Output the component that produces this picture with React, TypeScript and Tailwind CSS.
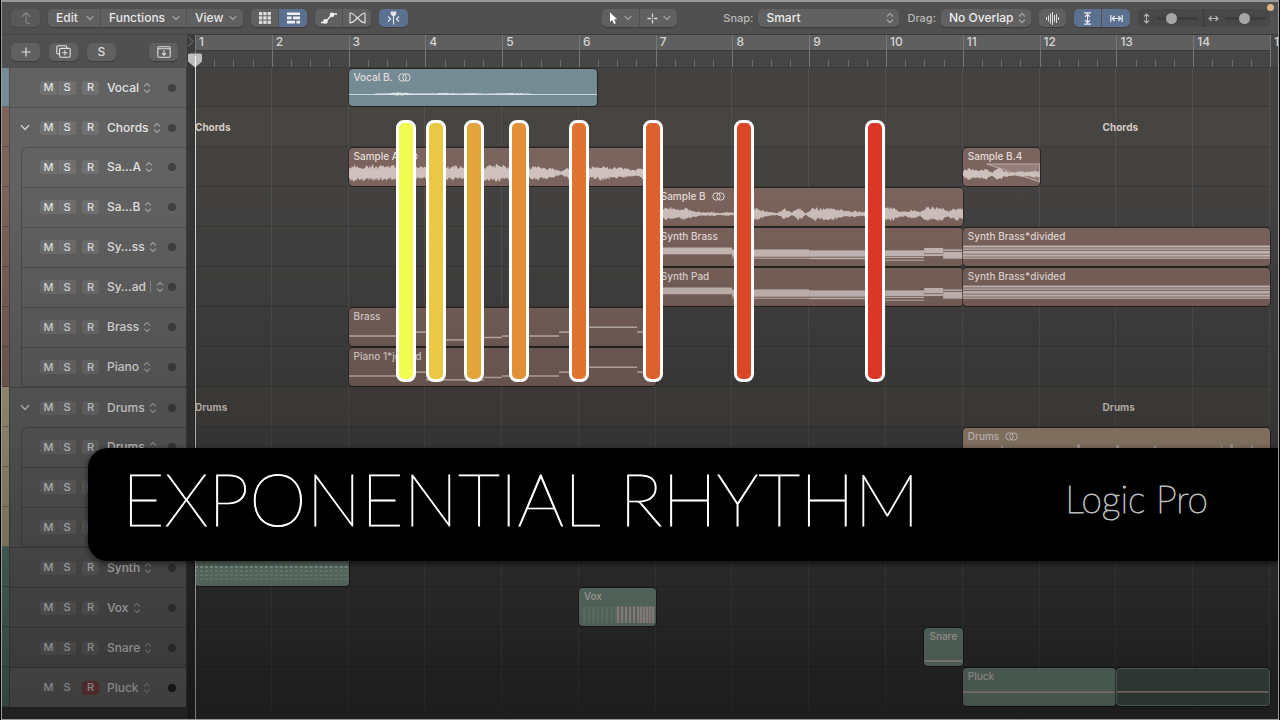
import React from "react";

const BARS = 14;
const pct = (bars: number) => `${(bars / BARS) * 100}%`;

type Kind = "vocal" | "chords" | "drums" | "green";

const stripColor: Record<Kind, string> = {
  vocal: "bg-[#768c95]",
  chords: "bg-[#7d635b]",
  drums: "bg-[#a8a17f]",
  green: "bg-[#5c7a73]",
};
const clipColor: Record<Kind, string> = {
  vocal: "bg-[#758b94]",
  chords: "bg-[#7b645d]",
  drums: "bg-[#a08b76]",
  green: "bg-[#7a9487]",
};

/* ---------- waveforms and notes ---------- */

function wave(width: number, mid: number, amp: (t: number) => number, seed: number, from = 0) {
  let s = seed;
  const rnd = () => {
    s = (s * 16807) % 2147483647;
    return s / 2147483647;
  };
  const top: string[] = [];
  const bottom: string[] = [];
  for (let x = from; x <= width; x += 1) {
    const a = amp((x - from) / (width - from));
    top.push(`${x} ${(mid - a * (0.55 + 0.6 * rnd())).toFixed(1)}`);
    bottom.unshift(`${x} ${(mid + a * (0.55 + 0.6 * rnd())).toFixed(1)}`);
  }
  return `M${top.join("L")}L${bottom.join("L")}Z`;
}

function envelope(points: number[]) {
  return (t: number) => {
    const p = t * (points.length - 1);
    const i = Math.min(points.length - 2, Math.floor(p));
    return points[i] + (points[i + 1] - points[i]) * (p - i);
  };
}

type Rect = [number, number, number, number];

function Notes({ width, rects }: { width: number; rects: Rect[] }) {
  return (
    <svg className="absolute inset-0 size-full" viewBox={`0 0 ${width} 39`} preserveAspectRatio="none" aria-hidden="true">
      {rects.map(([x, y, w, h], i) => (
        <rect key={i} x={x} y={y} width={w} height={h} fill="#cbbdba" />
      ))}
    </svg>
  );
}

function Wave({ width, d, children }: { width: number; d: string; children?: React.ReactNode }) {
  return (
    <svg className="absolute inset-0 size-full" viewBox={`0 0 ${width} 38`} preserveAspectRatio="none" aria-hidden="true">
      <path d={d} fill="#cfc1be" />
      {children}
    </svg>
  );
}

const brassNotes: Rect[] = [
  [0, 28, 54, 1.5],
  [54, 24, 23, 1.5],
  [77, 32, 46, 1.5],
  [115, 29.5, 38, 1.5],
  [153, 28, 57, 1.5],
  [210, 24, 24, 1.5],
  [234, 19, 54, 1.5],
  [288, 24, 19, 1.5],
];
const pianoNotes: Rect[] = [
  [0, 28, 54, 1.5],
  [54, 24, 23, 1.5],
  [77, 32, 58, 1.5],
  [135, 29.5, 18, 1.5],
  [153, 28, 57, 1.5],
  [210, 24, 24, 1.5],
  [234, 19, 54, 1.5],
  [288, 24, 19, 1.5],
];
const synthNotes: Rect[] = [
  [0, 20, 76, 7],
  [76, 22, 77, 7.5],
  [76, 30.5, 77, 1],
  [153, 23, 76, 6.5],
  [153, 30.5, 76, 1.5],
  [229, 23, 39, 6],
  [229, 29.8, 39, 1],
  [229, 32.5, 39, 1],
  [268, 20.5, 19, 5.5],
  [268, 26.8, 19, 2],
  [287, 22, 20, 1.5],
  [287, 24.5, 20, 7],
];
const dividedNotes: Rect[] = [
  [0, 18, 307, 2],
  [0, 21, 307, 1.4],
  [0, 23.4, 307, 3],
  [0, 27.2, 307, 2.2],
  [0, 30.2, 307, 1.4],
];
const voxNotes: Rect[] = [38, 42, 46, 50, 54, 58, 61, 64, 67, 70, 73].map((x): Rect => [x, 19, 2.4, 17]);

/* ---------- data ---------- */

interface Clip {
  name: string;
  start: number;
  length: number;
  stereo?: boolean;
  loop?: boolean;
  art?: React.ReactNode;
}
interface Track {
  name: string;
  kind: Kind;
  folder?: boolean;
  nest?: "first" | "mid" | "last";
  armed?: boolean;
  bar?: boolean;
  clips: Clip[];
}

const tracks: Track[] = [
  {
    name: "Vocal",
    kind: "vocal",
    clips: [
      {
        name: "Vocal B.",
        start: 3,
        length: 3.24,
        stereo: true,
        art: (
          <svg className="absolute inset-0 size-full" viewBox="0 0 248 37" preserveAspectRatio="none" aria-hidden="true">
            <path d="M0 25.5H248" stroke="#c9d6db" />
            <path d={wave(182, 25, envelope([0.4, 0.8, 1.5, 0.9, 0.6, 0.8, 1.2, 0.5, 1, 0.3, 0.6, 1.1, 0.9, 0.2]), 11, 25)} fill="#dbe5e9" />
          </svg>
        ),
      },
    ],
  },
  { name: "Chords", kind: "chords", folder: true, clips: [] },
  {
    name: "Sa…A",
    kind: "chords",
    nest: "first",
    clips: [
      {
        name: "Sample A",
        start: 3,
        length: 4,
        stereo: true,
        art: <Wave width={307} d={wave(307, 25, envelope([8, 7, 8, 7, 7, 8, 7, 6, 8, 7, 7, 6, 8, 7, 8, 7, 8, 6, 7, 5, 2, 7, 7, 6, 7, 6, 5, 3, 7, 6]), 77)} />,
      },
      {
        name: "Sample B.4",
        start: 11,
        length: 1,
        art: (
          <Wave width={77} d={wave(77, 26, envelope([3, 7, 4, 4, 5, 2, 7, 3, 2, 2, 3, 2, 4, 3]), 9)}>
            <path d="M24 16H77V34Z" fill="#cbbdba" fillOpacity="0.3" stroke="#cbbdba" strokeWidth="0.8" />
          </Wave>
        ),
      },
    ],
  },
  {
    name: "Sa…B",
    kind: "chords",
    nest: "mid",
    clips: [
      {
        name: "Sample B",
        start: 7,
        length: 4,
        stereo: true,
        art: (
          <Wave
            width={307}
            d={wave(307, 26, envelope([5, 6, 7, 4, 6, 4, 2, 2, 2, 1, 2, 1, 3, 4, 6, 4, 2, 1, 6, 1, 7, 1, 7, 5, 6, 6, 4, 3, 3, 2, 5, 4, 6, 7, 3, 3, 5, 2, 8, 6, 7, 3, 6, 7]), 23)}
          />
        ),
      },
    ],
  },
  {
    name: "Sy…ss",
    kind: "chords",
    nest: "mid",
    clips: [
      { name: "Synth Brass", start: 7, length: 4, art: <Notes width={307} rects={synthNotes} /> },
      { name: "Synth Brass*divided", start: 11, length: 4, art: <Notes width={307} rects={dividedNotes} /> },
    ],
  },
  {
    name: "Sy…ad",
    kind: "chords",
    nest: "mid",
    bar: true,
    clips: [
      { name: "Synth Pad", start: 7, length: 4, art: <Notes width={307} rects={synthNotes} /> },
      { name: "Synth Brass*divided", start: 11, length: 4, art: <Notes width={307} rects={dividedNotes} /> },
    ],
  },
  { name: "Brass", kind: "chords", nest: "mid", clips: [{ name: "Brass", start: 3, length: 4, art: <Notes width={307} rects={brassNotes} /> }] },
  { name: "Piano", kind: "chords", nest: "last", clips: [{ name: "Piano 1*joined", start: 3, length: 4, art: <Notes width={307} rects={pianoNotes} /> }] },
  { name: "Drums", kind: "drums", folder: true, clips: [] },
  {
    name: "Drums",
    kind: "drums",
    nest: "first",
    clips: [
      {
        name: "Drums",
        start: 11,
        length: 4,
        stereo: true,
        art: <Notes width={307} rects={[[38, 18, 2, 20], [114, 17, 3, 20], [153, 18, 3, 20], [191, 18, 2, 20], [258, 18, 1, 20], [267, 17, 3, 20], [288, 18, 2, 20]]} />,
      },
    ],
  },
  { name: "", kind: "drums", nest: "mid", clips: [] },
  { name: "", kind: "drums", nest: "last", clips: [] },
  {
    name: "Synth",
    kind: "green",
    clips: [
      {
        name: "",
        start: 1,
        length: 2,
        art: (
          <svg className="absolute inset-0 size-full" viewBox="0 0 154 37" preserveAspectRatio="none" aria-hidden="true">
            <path d="M0 18.5H154" stroke="#b9cbc0" strokeWidth="2" strokeDasharray="3 2" />
            <path d="M0 22.5H154M0 26.5H154M0 30.5H154" stroke="#94ad9f" strokeWidth="1.5" strokeDasharray="3 2" />
          </svg>
        ),
      },
    ],
  },
  {
    name: "Vox",
    kind: "green",
    clips: [
      {
        name: "Vox",
        start: 6,
        length: 1,
        art: (
          <>
            <svg className="absolute inset-0 size-full" viewBox="0 0 77 37" preserveAspectRatio="none" aria-hidden="true">
              <path d="M4 26.5H38" stroke="#8aa295" strokeWidth="16" strokeDasharray="3 1.5" />
            </svg>
            <Notes width={77} rects={voxNotes} />
          </>
        ),
      },
    ],
  },
  { name: "Snare", kind: "green", clips: [{ name: "Snare", start: 10.5, length: 0.5, art: <Notes width={38} rects={[[0, 33, 38, 1.8]]} /> }] },
  {
    name: "Pluck",
    kind: "green",
    armed: true,
    clips: [
      { name: "Pluck", start: 11, length: 2, art: <Notes width={154} rects={[[0, 24, 154, 1.6]]} /> },
      { name: "", start: 13, length: 2, loop: true, art: <Notes width={154} rects={[[0, 24, 154, 1.6]]} /> },
    ],
  },
];

const pillars = [
  { at: 3.75, color: "bg-[#f1fc52]" },
  { at: 4.14, color: "bg-[#e9c944]" },
  { at: 4.63, color: "bg-[#e3a63c]" },
  { at: 5.22, color: "bg-[#e28f37]" },
  { at: 6.0, color: "bg-[#df732f]" },
  { at: 6.96, color: "bg-[#dd612c]" },
  { at: 8.15, color: "bg-[#db4828]" },
  { at: 9.85, color: "bg-[#da3726]" },
];

/* ---------- small icons ---------- */

const Down = () => (
  <svg width="8" height="6" viewBox="0 0 8 6" fill="none" stroke="#9c9c9c" strokeWidth="1.4" strokeLinecap="round" strokeLinejoin="round" aria-hidden="true">
    <path d="M1 1.4L4 4.4L7 1.4" />
  </svg>
);
const UpDown = ({ className = "" }: { className?: string }) => (
  <svg className={className} width="8" height="12" viewBox="0 0 8 12" fill="none" stroke="#a0a0a0" strokeWidth="1.2" strokeLinecap="round" strokeLinejoin="round" aria-hidden="true">
    <path d="M1.4 4L4 1.5L6.6 4M1.4 8L4 10.5L6.6 8" />
  </svg>
);
const Rings = () => (
  <svg width="13" height="9" viewBox="0 0 13 9" fill="none" stroke="currentColor" strokeWidth="1" aria-hidden="true">
    <circle cx="4.5" cy="4.5" r="3.7" />
    <circle cx="8.5" cy="4.5" r="3.7" />
  </svg>
);

function Tool({ label, active, className = "", children }: { label: string; active?: boolean; className?: string; children: React.ReactNode }) {
  return (
    <button type="button" aria-label={label} className={`flex h-[18px] items-center justify-center text-[#dedede] ${active ? "bg-[#5c708f]" : "bg-[#606060]"} ${className}`}>
      {children}
    </button>
  );
}

const group = "flex overflow-hidden rounded-[5px] shadow-[0_1px_1px_rgba(0,0,0,0.25)] divide-x divide-[#525252]";
const single = "rounded-[5px] shadow-[0_1px_1px_rgba(0,0,0,0.25)]";

function Picker({ id, label, value, className }: { id: string; label: string; value: string; className: string }) {
  return (
    <div className="flex items-center gap-[5px]">
      <label htmlFor={id} className="text-[11px] text-[#b8b8b8]">
        {label}
      </label>
      <div className={`relative ${className}`}>
        <select id={id} defaultValue={value} className="block h-[18px] w-full appearance-none rounded-[5px] bg-[#616161] pl-2 text-[12px] leading-[18px] font-medium text-[#ececec] shadow-[0_1px_1px_rgba(0,0,0,0.25)]">
          <option>{value}</option>
        </select>
        <UpDown className="pointer-events-none absolute top-[3px] right-[5px]" />
      </div>
    </div>
  );
}

function Zoom({ label, value, children }: { label: string; value: number; children: React.ReactNode }) {
  return (
    <label className="flex h-[18px] w-[66px] items-center gap-[6px] px-1">
      {children}
      <input
        type="range"
        aria-label={label}
        defaultValue={value}
        className="h-[3px] w-[41px] appearance-none rounded-full bg-[#3d3d3d] [&::-webkit-slider-thumb]:size-[11px] [&::-webkit-slider-thumb]:appearance-none [&::-webkit-slider-thumb]:rounded-full [&::-webkit-slider-thumb]:bg-[#a6a6a6]"
      />
    </label>
  );
}

function Toolbar() {
  return (
    <header className="relative flex h-8 items-center bg-[#505050] pr-2 pl-[9px] text-[12px] font-medium text-[#e6e6e6]">
      <div className="flex gap-2">
        <Tool label="Back" className={`w-[29px] opacity-60 ${single}`}>
          <svg width="12" height="14" viewBox="0 0 12 14" fill="none" stroke="#a0a0a0" strokeWidth="1.3" strokeLinecap="round" strokeLinejoin="round">
            <path d="M2 5.5L6 1.5L10 5.5M6 2V10.5Q6 12.5 9.5 12.5" />
          </svg>
        </Tool>
        <div className={group}>
          {[
            ["Edit", "w-[53px]"],
            ["Functions", "w-[86px]"],
            ["View", "w-[56px]"],
          ].map(([name, w]) => (
            <button key={name} type="button" className={`flex h-[18px] items-center justify-between bg-[#606060] pr-[6px] pl-[8px] ${w}`}>
              {name}
              <Down />
            </button>
          ))}
        </div>
        <div className={group}>
          <Tool label="Grid view" className="w-7">
            <svg width="12" height="12" viewBox="0 0 12 12" fill="currentColor">
              {[0, 4.3, 8.6].map((y) => [0, 4.3, 8.6].map((x) => <rect key={`${x}-${y}`} x={x} y={y} width="3.3" height="3.3" />))}
            </svg>
          </Tool>
          <Tool label="Tracks view" active className="w-7">
            <svg width="13" height="12" viewBox="0 0 13 12" fill="#f2f2f2">
              <path d="M0 0.5H13V3H0ZM0 4.5H4.5V7.3H0ZM6 4.5H13V7.3H6ZM0 8.8H8V11.5H0ZM9.5 8.8H13V11.5H9.5Z" />
            </svg>
          </Tool>
        </div>
        <div className={group}>
          <Tool label="Automation" className="w-7">
            <svg width="18" height="12" viewBox="0 0 18 12" fill="none" stroke="#eeeeee" strokeWidth="1.3">
              <path d="M1 10.5H5L12.5 2H17" />
              <circle cx="5.4" cy="9.4" r="2.4" fill="#eeeeee" stroke="none" />
              <circle cx="12" cy="2.8" r="2.4" fill="#eeeeee" stroke="none" />
            </svg>
          </Tool>
          <Tool label="Flex" className="w-7">
            <svg width="17" height="12" viewBox="0 0 17 12" fill="none" stroke="#dddddd" strokeWidth="1.2" strokeLinejoin="round">
              <path d="M1 1Q3.5 1 8.5 6Q13.5 1 16 1V11Q13.5 11 8.5 6Q3.5 11 1 11Z" />
            </svg>
          </Tool>
        </div>
        <Tool label="Catch playhead" active className={`w-[29px] ${single}`}>
          <svg width="13" height="14" viewBox="0 0 13 14" fill="none" stroke="#e4e8ee" strokeWidth="1.1">
            <path d="M4.2 1H8.8V3L6.5 5.2L4.2 3Z" fill="#e4e8ee" />
            <path d="M6.5 4V13.5M1 5.5L3.6 8L1 10.5M12 5.5L9.4 8L12 10.5" />
          </svg>
        </Tool>
      </div>

      <div className={`mr-[46px] ml-auto ${group}`}>
        <Tool label="Pointer tool" className="w-[38px] gap-[6px]">
          <svg width="9" height="13" viewBox="0 0 9 13" fill="#ffffff">
            <path d="M1 0.5V10L3.3 8L5 12L6.8 11.2L5.1 7.3H8.2Z" />
          </svg>
          <Down />
        </Tool>
        <Tool label="Marquee tool" className="w-[37px] gap-[5px]">
          <svg width="11" height="11" viewBox="0 0 11 11" stroke="#d6d6d6" strokeWidth="1.3">
            <path d="M5.5 0.5V4M5.5 7V10.5M0.5 5.5H4M7 5.5H10.5M5 5.5H6" />
          </svg>
          <Down />
        </Tool>
      </div>

      <div className="flex items-center gap-2">
        <Picker id="snap" label="Snap:" value="Smart" className="w-[141px]" />
        <Picker id="drag" label="Drag:" value="No Overlap" className="w-[90px]" />
        <Tool label="Waveform zoom" className={`w-[27px] ${single}`}>
          <svg width="13" height="13" viewBox="0 0 13 13" stroke="#dcdcdc">
            <path d="M0.5 5V8M2.5 3.5V9.5M4.5 1.5V11.5M6.5 0V13M8.5 3V10M10.5 2V11M12.5 5V8" />
          </svg>
        </Tool>
        <div className={group}>
          <Tool label="Vertical auto zoom" active className="w-7">
            <svg width="9" height="13" viewBox="0 0 9 13" fill="none" stroke="#e6eaf0" strokeWidth="1.2">
              <path d="M1 0.8H8M1 12.2H8M4.5 2V11M2 4.8L4.5 2.2L7 4.8M2 8.2L4.5 10.8L7 8.2" />
            </svg>
          </Tool>
          <Tool label="Horizontal auto zoom" active className="w-7">
            <svg width="13" height="9" viewBox="0 0 13 9" fill="none" stroke="#e6eaf0" strokeWidth="1.2">
              <path d="M0.8 1V8M12.2 1V8M2 4.5H11M4.8 2L2.2 4.5L4.8 7M8.2 2L10.8 4.5L8.2 7" />
            </svg>
          </Tool>
        </div>
        <div className="flex divide-x divide-[#3c3c3c] rounded-[5px] bg-[#484848]">
          <Zoom label="Vertical zoom" value={31}>
            <svg width="9" height="11" viewBox="0 0 9 11" fill="none" stroke="#b4b4b4" strokeWidth="1.1">
              <path d="M4.5 1V10M2 3.5L4.5 1L7 3.5M2 7.5L4.5 10L7 7.5" />
            </svg>
          </Zoom>
          <Zoom label="Horizontal zoom" value={48}>
            <svg width="11" height="9" viewBox="0 0 11 9" fill="none" stroke="#b4b4b4" strokeWidth="1.1">
              <path d="M1 4.5H10M3.5 2L1 4.5L3.5 7M7.5 2L10 4.5L7.5 7" />
            </svg>
          </Zoom>
        </div>
      </div>
      <span className="absolute top-[2px] right-1 size-[7px] rounded-full bg-[#d9b487]" />
    </header>
  );
}

function HeaderTools() {
  return (
    <div className="flex w-[185px] shrink-0 items-center border-t border-[#464646] bg-[#505050] pr-[9px] pl-[9px]">
      <div className="flex gap-[9px]">
        <Tool label="Add track" className={`w-[29px] ${single}`}>
          <svg width="10" height="10" viewBox="0 0 10 10" stroke="#e0e0e0" strokeWidth="1.2">
            <path d="M5 0.5V9.5M0.5 5H9.5" />
          </svg>
        </Tool>
        <Tool label="Duplicate track" className={`w-[29px] ${single}`}>
          <svg width="15" height="13" viewBox="0 0 15 13" fill="none" stroke="#e0e0e0" strokeWidth="1.1">
            <path d="M3 9H2Q0.8 9 0.8 7.8V2Q0.8 0.8 2 0.8H9.5Q10.7 0.8 10.7 2V3" />
            <rect x="3.6" y="3.4" width="10.6" height="8.8" rx="1.2" />
            <path d="M8.9 5.3V10.3M6.4 7.8H11.4" />
          </svg>
        </Tool>
        <Tool label="Solo" className={`w-[29px] text-[12px] font-medium ${single}`}>
          S
        </Tool>
      </div>
      <Tool label="Hide headers" className={`ml-auto w-[29px] ${single}`}>
        <svg width="14" height="12" viewBox="0 0 14 12" fill="none" stroke="#dddddd" strokeWidth="1.1">
          <rect x="0.8" y="0.8" width="12.4" height="10.4" rx="1.2" />
          <path d="M1 2.8H13M7 4.2V9M5 7.2L7 9.2L9 7.2" />
        </svg>
      </Tool>
    </div>
  );
}

const barNumber = "pl-[3px] text-[12px] leading-[14px] font-medium text-[#d4d4d4]";

function Ruler() {
  return (
    <div className="relative flex min-w-0 flex-1 border-t border-b border-[#383838] bg-[#464646]">
      <div className="flex w-2 shrink-0 items-start bg-[#3b3b3b] pt-px">
        <svg width="7" height="11" viewBox="0 0 7 11" aria-hidden="true">
          <path d="M1 0.5L6 5.5L1 10.5" fill="none" stroke="#5c5c5c" strokeWidth="1.6" />
        </svg>
      </div>
      <div className="mr-2 flex min-w-0 flex-1">
        {Array.from({ length: BARS }, (_, i) => (
          <div key={i} className="relative flex flex-1 flex-col border-l border-[#777777]">
            <div className={`h-4 border-b border-[#3a3a3a] bg-[#5f5f5f] ${barNumber}`}>{i + 1}</div>
            <div className="flex flex-1 items-end justify-evenly">
              {[1, 2, 3].map((t) => (
                <span key={t} className="h-[7px] w-px bg-[#6c6c6c]" />
              ))}
            </div>
          </div>
        ))}
      </div>
      <div className={`absolute top-0 right-0 bottom-0 w-2 overflow-hidden border-l border-[#777777] ${barNumber}`}>15</div>
      <svg className="absolute top-[18px] left-0 z-10" width="16" height="15" viewBox="0 0 16 15" aria-hidden="true">
        <path d="M2.5 0.5H13.5Q15 0.5 15 2V7.5Q15 8.5 14.2 9.2L8 14.5L1.8 9.2Q1 8.5 1 7.5V2Q1 0.5 2.5 0.5Z" fill="#bdbdbd" />
        <path d="M8.5 3V15" stroke="#f4f4f4" />
      </svg>
    </div>
  );
}

const key = "flex h-[14px] items-center justify-center text-[11px] font-medium";

function TrackHeader({ track, first }: { track: Track; first: boolean }) {
  const nestClass =
    track.nest === "first"
      ? "border-l border-t rounded-tl-[7px]"
      : track.nest === "last"
        ? "border-l border-t border-b"
        : track.nest === "mid"
          ? "border-l border-t"
          : "";
  return (
    <div className={`flex text-[#e2e2e2] ${first ? "h-[39px]" : "h-10"}`}>
      <div className={`w-[7px] shrink-0 border-b border-black/25 ${stripColor[track.kind]}`} />
      <div className={`relative flex flex-1 items-center border-l border-[#4e4e4e] pl-[30px] ${track.armed ? "bg-[#6e6e6e]" : "bg-[#626262]"} ${track.nest || first ? "" : "border-t"}`}>
        {track.nest && <div className={`absolute inset-y-0 right-0 left-[11px] border-[#4e4e4e] ${nestClass}`} />}
        {track.folder && (
          <button type="button" aria-label={`Collapse ${track.name}`} className="absolute left-[10px]">
            <svg width="10" height="7" viewBox="0 0 10 7" fill="none" stroke="#d0d0d0" strokeWidth="1.4">
              <path d="M1 1.2L5 5.4L9 1.2" />
            </svg>
          </button>
        )}
        <div className="relative flex divide-x divide-[#626262] overflow-hidden rounded-[3px] bg-[#707070]">
          <button type="button" aria-label={`Mute ${track.name}`} className={`${key} w-[18px]`}>
            M
          </button>
          <button type="button" aria-label={`Solo ${track.name}`} className={`${key} w-[18px]`}>
            S
          </button>
        </div>
        <button type="button" aria-label={`Record ${track.name}`} className={`${key} relative ml-[6px] w-[17px] rounded-[3px] ${track.armed ? "bg-[#874a4a]" : "bg-[#707070]"}`}>
          R
        </button>
        {track.name && (
          <>
            <span className="relative ml-2 text-[12px] font-medium">{track.name}</span>
            {track.bar && <span className="relative ml-1 h-3 w-px bg-[#888888]" />}
            <UpDown className={`relative ${track.bar ? "ml-[5px]" : "ml-1"}`} />
          </>
        )}
        <span className={`absolute right-[10px] size-2 rounded-full ${track.armed ? "bg-[#222222]" : "bg-[#414141]"}`} />
      </div>
    </div>
  );
}

function Lane({ track, first }: { track: Track; first: boolean }) {
  return (
    <div className={`relative border-b border-black/15 ${first ? "h-[39px]" : "h-10"} ${track.folder ? "bg-[#a08060]/5" : ""}`}>
      {track.folder &&
        [1, 12.82].map((at) => (
          <span key={at} className="absolute top-[13px] text-[10px] leading-[14px] font-bold text-[#d6ccc6]" style={{ left: pct(at - 1) }}>
            {track.name}
          </span>
        ))}
      {track.clips.map((c, i) => (
        <div
          key={i}
          className={`absolute top-px bottom-0 overflow-hidden rounded-[4px] shadow-[0_0_0_1px_rgba(20,16,16,0.55)] ${c.loop ? "border border-[#7a9487] bg-[#4f5d56]" : clipColor[track.kind]}`}
          style={{ left: pct(c.start - 1), width: pct(c.length) }}
        >
          {c.art}
          <div className="relative flex items-center gap-[6px] pl-[5px] text-[10px] leading-[16px] font-medium text-[#e4dcda]">
            {c.name}
            {c.stereo && <Rings />}
          </div>
        </div>
      ))}
    </div>
  );
}

export default function App() {
  return (
    <div className="flex min-h-screen flex-col bg-black px-px font-['Inter',sans-serif]">
      <div className="relative flex flex-1 flex-col overflow-hidden border border-t-2 border-[#999999] bg-[#3a3a3a]">
        <Toolbar />
        <div className="flex h-[34px]">
          <HeaderTools />
          <Ruler />
        </div>

        <div className="flex flex-1">
          <aside className="w-[185px] shrink-0 border-r border-[#404040]">
            {tracks.map((t, i) => (
              <TrackHeader key={i} track={t} first={i === 0} />
            ))}
          </aside>
          <main className="relative flex min-w-0 flex-1 bg-linear-to-b from-[#434241] from-60% to-[#343434]">
            <div className="w-2 shrink-0 border-r border-[#303030] bg-black/15" />
            <div className="relative mr-2 min-w-0 flex-1">
              <div className="absolute inset-x-0 top-0 bottom-[10px] flex divide-x divide-white/7 border-r border-white/7">
                {Array.from({ length: BARS }, (_, i) => (
                  <span key={i} className="flex-1" />
                ))}
              </div>
              {tracks.map((t, i) => (
                <Lane key={i} track={t} first={i === 0} />
              ))}
              <div className="absolute inset-y-0 left-0 w-px bg-[#d8d8d8]" />
              {pillars.map((p) => (
                <div
                  key={p.at}
                  className={`absolute top-[52px] z-20 h-[262px] w-5 -translate-x-1/2 rounded-[8px] border-3 border-white ${p.color}`}
                  style={{ left: pct(p.at - 1) }}
                />
              ))}
            </div>
          </main>
        </div>

        <div className="pointer-events-none absolute inset-0 z-10 bg-linear-to-b from-transparent from-25% to-black/45" />

        <section className="absolute top-[446px] right-0 left-[86px] z-30 flex h-[113px] items-center justify-between rounded-l-[20px] bg-black pr-[70px] pb-3 pl-[34px] font-['Lato',sans-serif] font-thin whitespace-nowrap text-white shadow-[0_2px_6px_rgba(0,0,0,0.6)]">
          <h1 className="text-[73px] leading-none [-webkit-text-stroke:1px_#ffffff]">EXPONENTIAL RHYTHM</h1>
          <p className="text-[37px] leading-none text-[#dddddd] [-webkit-text-stroke:1px_#bbbbbb]">Logic Pro</p>
        </section>
      </div>
    </div>
  );
}
